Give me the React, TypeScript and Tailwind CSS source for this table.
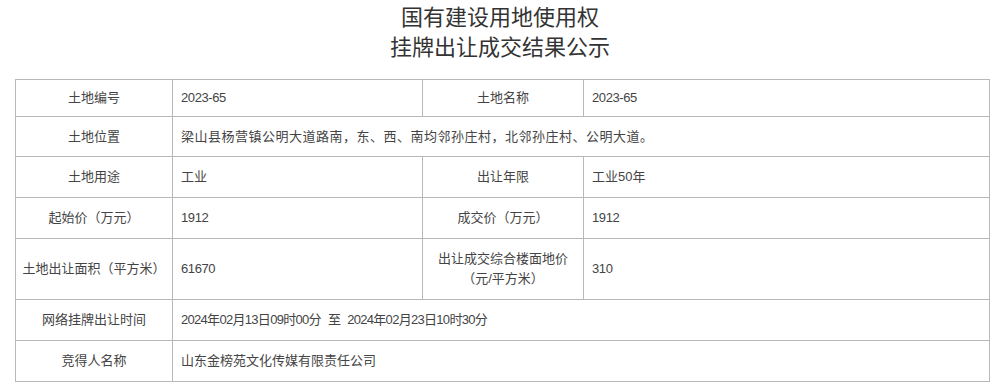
// 国有建设用地使用权挂牌出让成交结果公示 — static notice table.

const FONT = `"Liberation Sans", "Noto Sans CJK SC", sans-serif`;

const cell = "border border-[#b8b8b8] text-[13px] text-[#444]";
const label = `${cell} text-center`;
const value = `${cell} pl-2 text-left`;

export default function App() {
  return (
    <div lang="zh-CN" className="h-[384px] w-[1000px] bg-white" style={{ fontFamily: FONT }}>
      <div className="pt-[3px] text-center text-[22px] leading-[30px] text-[#333]">
        <div>国有建设用地使用权</div>
        <div>挂牌出让成交结果公示</div>
      </div>
      <div className="mt-4 px-[15px]">
        <table className="w-[975px] table-fixed border-collapse">
          <colgroup>
            <col className="w-[157px]" />
            <col className="w-[250px]" />
            <col className="w-[161px]" />
            <col />
          </colgroup>
          <tbody>
            <tr className="h-[37px]">
              <td className={label}>土地编号</td>
              <td className={`${value} tracking-[-0.4px]`}>2023-65</td>
              <td className={label}>土地名称</td>
              <td className={`${value} tracking-[-0.4px]`}>2023-65</td>
            </tr>
            <tr className="h-[40px]">
              <td className={label}>土地位置</td>
              <td className={`${value} tracking-[0.5px]`} colSpan={3}>
                梁山县杨营镇公明大道路南，东、西、南均邻孙庄村，北邻孙庄村、公明大道。
              </td>
            </tr>
            <tr className="h-[41px]">
              <td className={label}>土地用途</td>
              <td className={value}>工业</td>
              <td className={label}>出让年限</td>
              <td className={value}>工业50年</td>
            </tr>
            <tr className="h-[41px]">
              <td className={label}>起始价（万元）</td>
              <td className={`${value} tracking-[-0.4px]`}>1912</td>
              <td className={label}>成交价（万元）</td>
              <td className={`${value} tracking-[-0.4px]`}>1912</td>
            </tr>
            <tr className="h-[61px]">
              <td className={label}>土地出让面积（平方米）</td>
              <td className={`${value} tracking-[-0.4px]`}>61670</td>
              <td className={`${label} leading-[20px]`}>
                出让成交综合楼面地价
                <br />
                （元/平方米）
              </td>
              <td className={`${value} tracking-[-0.4px]`}>310</td>
            </tr>
            <tr className="h-[41px]">
              <td className={label}>网络挂牌出让时间</td>
              <td className={`${value} tracking-[-0.7px]`} colSpan={3}>
                2024年02月13日09时00分<span className="mx-[7px]">至</span>2024年02月23日10时30分
              </td>
            </tr>
            <tr className="h-[41px]">
              <td className={label}>竞得人名称</td>
              <td className={value} colSpan={3}>
                山东金榜苑文化传媒有限责任公司
              </td>
            </tr>
          </tbody>
        </table>
      </div>
    </div>
  );
}
